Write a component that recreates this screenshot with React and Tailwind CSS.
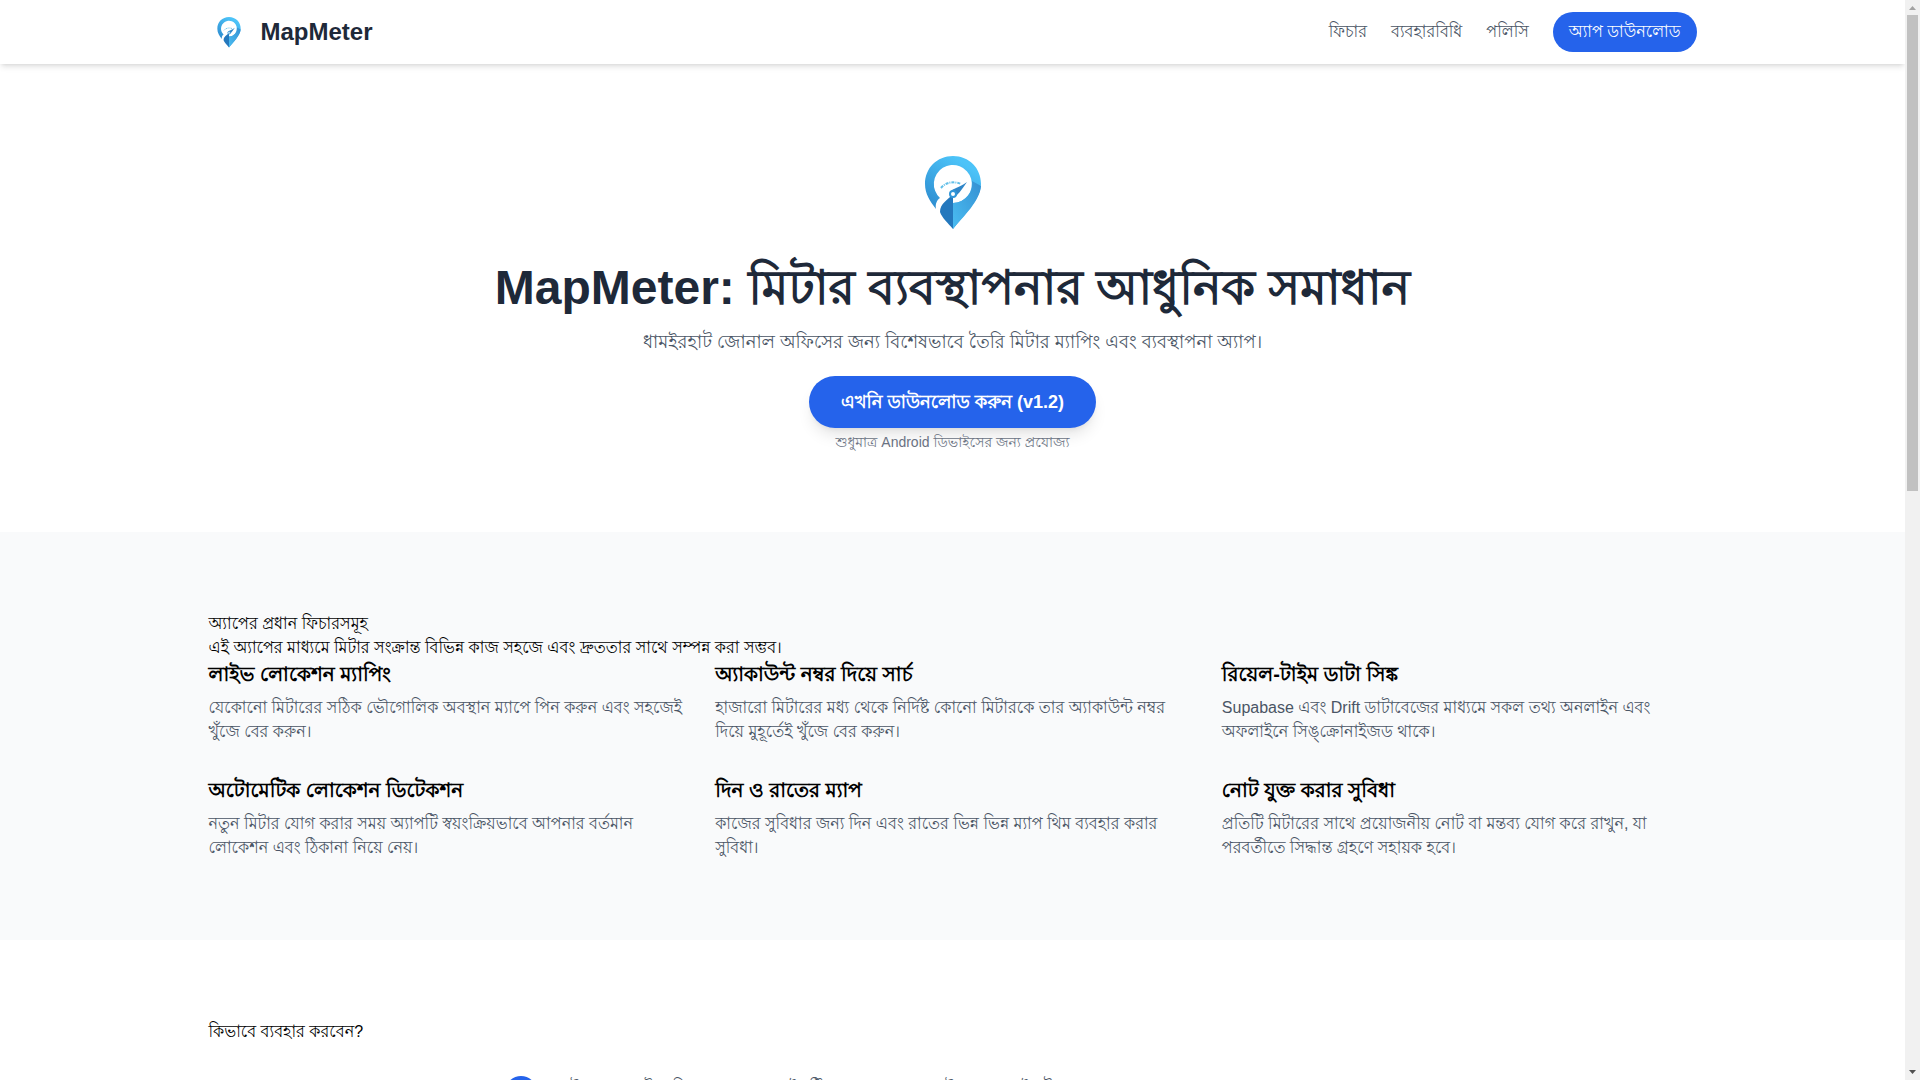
const features = [
  { title: 'লাইভ লোকেশন ম্যাপিং', text: 'যেকোনো মিটারের সঠিক ভৌগোলিক অবস্থান ম্যাপে পিন করুন এবং সহজেই খুঁজে বের করুন।' },
  { title: 'অ্যাকাউন্ট নম্বর দিয়ে সার্চ', text: 'হাজারো মিটারের মধ্য থেকে নির্দিষ্ট কোনো মিটারকে তার অ্যাকাউন্ট নম্বর দিয়ে মুহূর্তেই খুঁজে বের করুন।' },
  { title: 'রিয়েল-টাইম ডাটা সিঙ্ক', text: 'Supabase এবং Drift ডাটাবেজের মাধ্যমে সকল তথ্য অনলাইন এবং অফলাইনে সিঙ্\u200cক্রোনাইজড থাকে।' },
  { title: 'অটোমেটিক লোকেশন ডিটেকশন', text: 'নতুন মিটার যোগ করার সময় অ্যাপটি স্বয়ংক্রিয়ভাবে আপনার বর্তমান লোকেশন এবং ঠিকানা নিয়ে নেয়।' },
  { title: 'দিন ও রাতের ম্যাপ', text: 'কাজের সুবিধার জন্য দিন এবং রাতের ভিন্ন ভিন্ন ম্যাপ থিম ব্যবহার করার সুবিধা।' },
  { title: 'নোট যুক্ত করার সুবিধা', text: 'প্রতিটি মিটারের সাথে প্রয়োজনীয় নোট বা মন্তব্য যোগ করে রাখুন, যা পরবর্তীতে সিদ্ধান্ত গ্রহণে সহায়ক হবে।' },
]

const steps = [
  'ডাউনলোড বাটনে ক্লিক করে APK ফাইলটি আপনার ফোনে ডাউনলোড ও ইনস্টল করুন।',
]

function Logo({ className }) {
  return (
    <svg viewBox="0 0 96 96" className={className} aria-hidden="true">
      <defs>
        <linearGradient id="pin" x1="0" y1="1" x2="0.5" y2="0">
          <stop offset="0.2" stopColor="#2a86cb" />
          <stop offset="1" stopColor="#4cc3f8" />
        </linearGradient>
        <linearGradient id="tip" x1="0" y1="1" x2="1" y2="0">
          <stop offset="0" stopColor="#4abdf2" />
          <stop offset="1" stopColor="#3590d2" />
        </linearGradient>
      </defs>
      <path d="M48 12C32 12 20 24 20 40C20 50 25 57 31 65C30 60 32 56 35 54A19 19 0 1 1 48 59V85C57 73 76 55 76 40C76 24 64 12 48 12Z" fill="url(#pin)" />
      <path d="M48 59A19 19 0 0 0 67 37L76 42C75 57 58 73 48 85Z" fill="url(#tip)" />
      <path d="M48 50C43 56 35 59 35 68C37 74 43 79 48 85Z" fill="#2478bd" />
      <path d="M45 48C48 44 54 44 62 38C56 47 54 49 51 52Z" fill="#2f86c8" />
      <path d="M36 44C41 38 49 37 56 40" fill="none" stroke="#62bfe8" strokeWidth="2" strokeDasharray="3 1 1 1" />
      <circle cx="48" cy="50" r="3" fill="#fff" stroke="#2f95d8" strokeWidth="2" />
    </svg>
  )
}

function Scrollbar() {
  return (
    <div className="flex w-[15px] shrink-0 flex-col items-center bg-[#f1f1f1]" aria-hidden="true">
      <svg viewBox="0 0 15 15" className="h-[15px] w-[15px]"><path d="M4 10L7.5 6L11 10Z" fill="#a3a3a3" /></svg>
      <div className="h-[476px] w-[11px] bg-[#c1c1c1]" />
      <svg viewBox="0 0 15 15" className="mt-auto h-[15px] w-[15px]"><path d="M4 5L7.5 9L11 5Z" fill="#505050" /></svg>
    </div>
  )
}

export default function App() {
  return (
    <div lang="bn" className="flex h-screen overflow-hidden bg-white font-['Liberation_Sans','Lohit_Bengali',sans-serif] text-black">
      <div className="min-w-0 flex-1 overflow-hidden">
        <header className="relative bg-white shadow-md">
          <nav className="container mx-auto flex items-center justify-between px-6 py-3">
            <a href="#home" className="flex items-center gap-3">
              <Logo className="h-10 w-10" />
              <span className="text-2xl font-bold text-gray-800">MapMeter</span>
            </a>
            <div className="flex items-center gap-6 text-gray-600">
              <a href="#features">ফিচার</a>
              <a href="#how-to-use">ব্যবহারবিধি</a>
              <a href="#policy">পলিসি</a>
              <a href="#download" className="rounded-full bg-[#2563eb] px-4 py-2 text-white">অ্যাপ ডাউনলোড</a>
            </div>
          </nav>
        </header>

        <main>
          <section id="home" className="container mx-auto flex flex-col items-center px-6 py-20 text-center">
            <Logo className="h-24 w-24" />
            <h1 className="mt-6 text-5xl leading-[48px] font-extrabold text-gray-800">MapMeter: মিটার ব্যবস্থাপনার আধুনিক সমাধান</h1>
            <p className="mt-4 text-lg text-gray-600">ধামইরহাট জোনাল অফিসের জন্য বিশেষভাবে তৈরি মিটার ম্যাপিং এবং ব্যবস্থাপনা অ্যাপ।</p>
            <a href="#download" className="mt-5 rounded-full bg-[#2563eb] px-8 py-3 text-lg font-bold text-white shadow-lg">এখনি ডাউনলোড করুন (v1.2)</a>
            <p className="mt-1 text-sm text-gray-500">শুধুমাত্র Android ডিভাইসের জন্য প্রযোজ্য</p>
          </section>

          <section id="features" className="bg-gray-50 py-20">
            <div className="container mx-auto px-6">
              <h2>অ্যাপের প্রধান ফিচারসমূহ</h2>
              <p>এই অ্যাপের মাধ্যমে মিটার সংক্রান্ত বিভিন্ন কাজ সহজে এবং দ্রুততার সাথে সম্পন্ন করা সম্ভব।</p>
              <div className="grid gap-8 md:grid-cols-2 lg:grid-cols-3">
                {features.map(f => (
                  <div key={f.title}>
                    <h3 className="mb-2 text-xl font-bold">{f.title}</h3>
                    <p className="text-gray-600">{f.text}</p>
                  </div>
                ))}
              </div>
            </div>
          </section>

          <section id="how-to-use" className="py-20">
            <div className="container mx-auto px-6">
              <h2>কিভাবে ব্যবহার করবেন?</h2>
              <ol className="mx-auto mt-8 max-w-4xl space-y-8">
                {steps.map((s, i) => (
                  <li key={s} className="flex items-start gap-4">
                    <span className="flex h-8 w-8 shrink-0 items-center justify-center rounded-full bg-[#2563eb] font-bold text-white">{i + 1}</span>
                    <p className="text-gray-600">{s}</p>
                  </li>
                ))}
              </ol>
            </div>
          </section>
        </main>
      </div>
      <Scrollbar />
    </div>
  )
}
